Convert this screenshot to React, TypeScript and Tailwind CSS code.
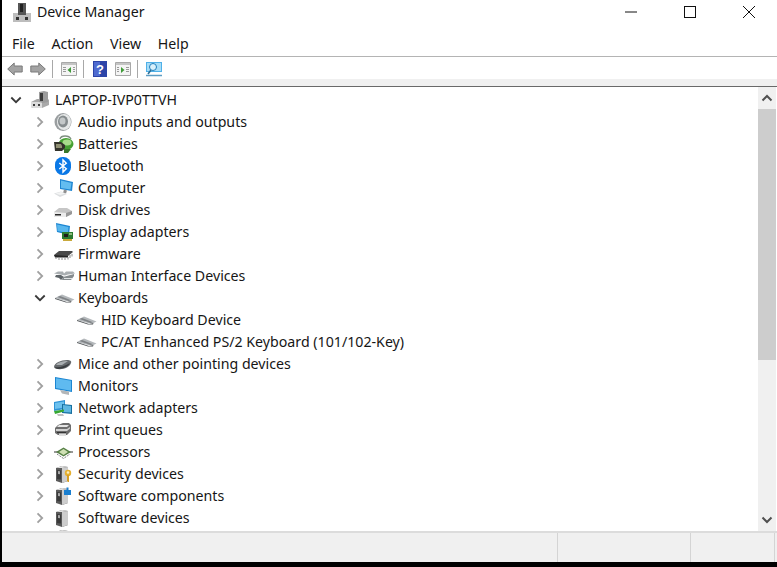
import type { ReactNode } from 'react';

const Svg = ({ children, w = 18, h = 18 }: { children: ReactNode; w?: number; h?: number }) => (
  <svg width={w} height={h} viewBox={`0 0 ${w} ${h}`} className="block shrink-0">
    {children}
  </svg>
);

const Laptop = () => (
  <Svg>
    <path d="M0 11l6-3h11l1 1v5l-7 3H2l-2-1z" fill="#a9a9a9" />
    <path d="M0 11h11v6H2l-2-1z" fill="#dcdcdc" />
    <path d="M8 1l5-1 4 1v10l-5 1-4-1z" fill="#9c9c9c" />
    <path d="M9 2h3v8H9z" fill="#3a3a3a" />
    <path d="M2 13h2v2H2zM7 13h2v2H7z" fill="#3e3e3e" />
  </Svg>
);
const Audio = () => (
  <Svg>
    <ellipse cx="9" cy="9" rx="8.500" ry="9" fill="#9a9ea0" />
    <ellipse cx="10" cy="9" rx="7" ry="8" fill="#e6e8e8" />
    <ellipse cx="9" cy="8.500" rx="5" ry="6" fill="#868c8e" />
    <ellipse cx="8.500" cy="8" rx="3" ry="3.500" fill="#c4c8c9" />
  </Svg>
);
const Battery = () => (
  <Svg w={20}>
    <path d="M6 4c1-4 9-4 11 0" stroke="#7f8f80" strokeWidth="1.300" fill="none" />
    <ellipse cx="12" cy="9" rx="7.500" ry="6" fill="#45a032" />
    <ellipse cx="13" cy="7.500" rx="4.500" ry="3" fill="#a8dc8c" />
    <path d="M0 7h7l4 3v3l-3 3H1z" fill="#33332b" />
    <path d="M2 9h5l1 2v2H2z" fill="#8f8f72" />
    <path d="M10 14h7l-3 4h-4z" fill="#38792a" />
  </Svg>
);
const Bluetooth = () => (
  <Svg>
    <rect x="1" y="0" width="16" height="18" rx="7.500" fill="#0a78e6" />
    <path d="M5.300 6l7 5.700L9 15V3l3.300 3.300-7 5.700" stroke="#fff" strokeWidth="1.400" fill="none" />
  </Svg>
);
const Computer = () => (
  <Svg w={20}>
    <path d="M6 0l13 3-1 9-12-2z" fill="#1f86d2" />
    <path d="M7 1.500l10.500 2.500-1 6.500L7 9z" fill="#63bdf0" />
    <path d="M10 10.500l3 1-1 3-3-.5z" fill="#8f8f8f" />
    <path d="M0 14.500l7-2 6 2.500-7 3z" fill="#dcdee0" />
    <path d="M1.500 14.500l5.500-1.500 4 1.500-5 1.500z" fill="#f3f4f4" />
  </Svg>
);
const Disk = () => (
  <Svg>
    <path d="M0 11l5-4h8l5 3v3l-6 3H1l-1-1z" fill="#c6c6c6" />
    <path d="M0 11l12 1v4H1l-1-1z" fill="#ececec" />
    <path d="M1 13h6v1.500H1z" fill="#2a2a2a" />
    <path d="M12 12l6-2v3l-6 3z" fill="#989898" />
  </Svg>
);
const Display = () => (
  <Svg w={20}>
    <path d="M2 0l14 3-1 9-12-3z" fill="#1c86d2" />
    <path d="M3 1.500l11.500 2.500-.5 6L3.500 8z" fill="#58b7ee" />
    <path d="M8 9h11v7H8z" fill="#2b7a30" />
    <path d="M10 11h4v3h-4z" fill="#1c1c1c" />
    <path d="M15 10h3v2h-3z" fill="#8dbb7c" />
    <path d="M9 16h9v2H9z" fill="#c9a93c" />
  </Svg>
);
const Firmware = () => (
  <Svg w={20}>
    <path d="M0 10l5-4h13l1 1-5 4H1z" fill="#4a4a4a" />
    <path d="M0 10l14 1v1.500H1z" fill="#262626" />
    <path d="M2 12v2M5 12.500v2.500M8 12.500v2.500M11 12.500v2.500M14 12v2.500M16 10v3M18 9v2.500" stroke="#8c8c8c" strokeWidth="1" />
  </Svg>
);
const Hid = () => (
  <Svg w={21}>
    <path d="M0 6.500l4-2h5l1 2 2-2h7l2 2-7 1-3 1-5-1z" fill="#a9aeb1" />
    <path d="M2 8h5l3 2-3 3-2-2-4-1z" fill="#5f6569" />
    <path d="M9 10l11-3v2l-3 4H8z" fill="#858b8e" />
    <path d="M10 11.500h8" stroke="#dfe2e3" strokeWidth="1" />
  </Svg>
);
const Keyboard = ({ w = 21 }: { w?: number }) => (
  <Svg w={w}>
    <path d="M1 9l7-3.500 12.500 5-3.500 1.700H13z" fill="#b4b8bb" />
    <path d="M6 7l11 4.300-2.500.7-11-4z" fill="#7f8386" />
    <path d="M1 9l12 4 4.500-1-.5 1.500H12L1 10z" fill="#55595c" />
  </Svg>
);
const Mouse = () => (
  <Svg>
    <path d="M0 12c0-4 7-7 13-7 3 0 5 1 4 3-1 4-8 7-13 6-2 0-4-1-4-2z" fill="#666a6d" />
    <path d="M2 10c2-3 7-4 12-4l-6 4z" fill="#a9aeb1" />
    <path d="M1 12c4 1 10-1 15-4-1 3-7 6-12 6-1 0-3-1-3-2z" fill="#393c3f" />
  </Svg>
);
const Monitor = () => (
  <Svg w={19}>
    <path d="M1 0l17 3v12L1 12z" fill="#1c86d2" />
    <path d="M2 1.200l15 2.500v10L2 11z" fill="#5fbaf0" />
    <path d="M6 13l9 1.500V18l-7-1.500z" fill="#b3b6b8" />
  </Svg>
);
const Network = () => (
  <Svg w={19}>
    <path d="M0 3l11-2v9L0 12z" fill="#2f93d6" />
    <path d="M1 4l9-1.500v6L1 10z" fill="#6cc1ee" />
    <path d="M8 5l10 1v9l-10-1z" fill="#176f9f" />
    <path d="M9 6l8 1v6.500L9 13z" fill="#5fb7e2" />
    <path d="M0 12l10-1.500v2L1 15z" fill="#36a832" />
    <path d="M3 15h6l1 2H4z" fill="#bfbfbf" />
  </Svg>
);
const Printer = () => (
  <Svg>
    <path d="M4 4l5-2h6l2 2v6l-4 4H4l-3-2V7z" fill="#6d6d6d" />
    <path d="M5 4h10l-2 2H3z" fill="#e4e4e4" />
    <path d="M2 8h11l3-2v1.500L13 10H2z" fill="#cfcfcf" />
    <path d="M3 11h9v1H3z" fill="#333" />
    <path d="M5 12.500h7V15H5z" fill="#dedede" />
  </Svg>
);
const Processor = () => (
  <Svg w={19}>
    <path d="M0 9h19" stroke="#333" strokeWidth="1" />
    <path d="M9.500 4.500l7.500 4.500-7.500 4.500L2 9z" fill="#557f44" />
    <path d="M9.500 6l4.500 3-4.500 3L5 9z" fill="#cfe0b4" />
    <path d="M3 11l6.500 4.500L16 11" stroke="#555" fill="none" strokeWidth="1" strokeDasharray="1 1" />
  </Svg>
);
const Tower = () => (
  <>
    <path d="M2 3l6-2 6 1v14l-6 2-6-2z" fill="#5a5a5a" />
    <path d="M8 3l6-1v14l-6 2z" fill="#cdcdcd" />
    <path d="M3 5l4 .500v9L3 14z" fill="#3a3a3a" />
    <path d="M4 6l2 .300v3L4 9z" fill="#a8a8a8" />
    <path d="M2 3l6-2 6 1-6 1z" fill="#e2e2e2" />
  </>
);
const Security = () => (
  <Svg>
    <Tower />
    <circle cx="14" cy="8" r="3.200" fill="#e5b030" />
    <circle cx="14" cy="7.500" r="1.300" fill="#fbeec0" />
    <path d="M13 10h2v7h-1l-1-1z" fill="#d89f22" />
  </Svg>
);
const SoftComp = () => (
  <Svg>
    <Tower />
    <path d="M10 3h2.500V0.500h2V3H17v5H10z" fill="#1a7fd0" />
  </Svg>
);
const SoftDev = () => (
  <Svg>
    <Tower />
  </Svg>
);

const Chevron = ({ open }: { open?: boolean }) => (
  <svg width="16" height="16" viewBox="0 0 16 16" className="block shrink-0">
    {open ? (
      <path d="M3.300 5.500L8 10.200l4.700-4.700" stroke="#3a3a3a" strokeWidth="1.800" fill="none" />
    ) : (
      <path d="M5.500 3.300L10.200 8l-4.700 4.700" stroke="#a0a0a0" strokeWidth="1.800" fill="none" />
    )}
  </svg>
);

const rows: { label: string; icon: ReactNode }[] = [
  { label: 'Audio inputs and outputs', icon: <Audio /> },
  { label: 'Batteries', icon: <Battery /> },
  { label: 'Bluetooth', icon: <Bluetooth /> },
  { label: 'Computer', icon: <Computer /> },
  { label: 'Disk drives', icon: <Disk /> },
  { label: 'Display adapters', icon: <Display /> },
  { label: 'Firmware', icon: <Firmware /> },
  { label: 'Human Interface Devices', icon: <Hid /> },
];

const rowsAfter: { label: string; icon: ReactNode }[] = [
  { label: 'Mice and other pointing devices', icon: <Mouse /> },
  { label: 'Monitors', icon: <Monitor /> },
  { label: 'Network adapters', icon: <Network /> },
  { label: 'Print queues', icon: <Printer /> },
  { label: 'Processors', icon: <Processor /> },
  { label: 'Security devices', icon: <Security /> },
  { label: 'Software components', icon: <SoftComp /> },
  { label: 'Software devices', icon: <SoftDev /> },
];

function Row({ label, icon, open }: { label: string; icon: ReactNode; open?: boolean }) {
  return (
    <div className="flex h-[22px] shrink-0 items-center pl-[27px]">
      <Chevron open={open} />
      <div className="ml-[6px] flex w-[24px] justify-start">{icon}</div>
      <span className="whitespace-nowrap">{label}</span>
    </div>
  );
}

function Child({ label }: { label: string }) {
  return (
    <div className="flex h-[22px] shrink-0 items-center pl-[71px]">
      <div className="w-[25px]">
        <Keyboard />
      </div>
      <span className="whitespace-nowrap">{label}</span>
    </div>
  );
}

function Sep() {
  return <div className="h-[18px] w-px shrink-0 bg-[#a8a8a8]" />;
}

export default function App() {
  return (
    <div className="flex h-[567px] w-[777px] flex-col overflow-hidden bg-black pl-[2px] pb-[5px] font-['Noto_Sans',sans-serif] text-[14.2px] text-[#161616]">
      <div className="flex min-h-0 flex-1 flex-col bg-white">
        {/* title bar */}
        <div className="flex h-[33px] shrink-0 items-center">
          <div className="ml-[10px] mt-[-8px]">
            <svg width="20" height="22" viewBox="0 0 20 22" className="block">
              <path d="M1 11h18v9H1z" fill="#bdbdbd" />
              <path d="M6 1h8v12H6z" fill="#555" />
              <path d="M8 2h3v8H8z" fill="#222" />
              <path d="M4 15h3v3H4zM13 15h3v3h-3z" fill="#333" />
            </svg>
          </div>
          <span className="ml-[5px] mt-[-9px]">Device Manager</span>
          <div className="mb-[10px] ml-auto flex items-center">
            <svg width="14" height="14" viewBox="0 0 14 14" className="mr-[45px] block">
              <path d="M1 7h12" stroke="#111" strokeWidth="1" />
            </svg>
            <svg width="14" height="14" viewBox="0 0 14 14" className="mr-[45px] block">
              <rect x="1.500" y="1.500" width="11" height="11" stroke="#111" fill="none" strokeWidth="1" />
            </svg>
            <svg width="14" height="14" viewBox="0 0 14 14" className="mr-[21px] block">
              <path d="M1 1l12 12M13 1L1 13" stroke="#111" strokeWidth="1" />
            </svg>
          </div>
        </div>

        {/* menu */}
        <div className="flex h-[24px] shrink-0 items-center gap-[16.7px] border-b border-[#b4b4b4] pb-[2px] pl-[10px]">
          <span>File</span>
          <span>Action</span>
          <span>View</span>
          <span>Help</span>
        </div>

        {/* toolbar */}
        <div className="flex h-[22px] shrink-0 items-center pl-[5px] pt-[1px]">
          <svg width="16" height="14" viewBox="0 0 16 14" className="block">
            <path d="M.7 7l6.500-6v3h8v6h-8v3z" fill="#a3a3a3" stroke="#7b7b7b" />
          </svg>
          <svg width="16" height="14" viewBox="0 0 16 14" className="ml-[7px] block">
            <path d="M15.300 7l-6.500-6v3h-8v6h8v3z" fill="#a3a3a3" stroke="#7b7b7b" />
          </svg>
          <div className="ml-[6px]">
            <Sep />
          </div>
          <svg width="16" height="14" viewBox="0 0 16 14" className="ml-[8px] block">
            <path d="M.5.500h15v13H.5z" fill="#f4f4f4" stroke="#a8a8a8" />
            <path d="M1 1h14v2H1z" fill="#c4c4c4" />
            <path d="M2 5h3v1H2zM2 7h3v1H2zM2 9h3v1H2zM12 5h2v1h-2zM12 7h2v1h-2zM12 9h2v1h-2z" fill="#9a9a9a" />
            <path d="M10 5v6L6.500 8z" fill="#3f9a38" />
          </svg>
          <div className="ml-[6px]">
            <Sep />
          </div>
          <svg width="14" height="16" viewBox="0 0 14 16" className="ml-[9px] block">
            <rect width="14" height="16" fill="#2c44a8" />
            <rect x="1" y="1" width="6" height="14" fill="#4f6bd0" />
            <text x="7" y="13" textAnchor="middle" fontSize="13" fontWeight="700" fontFamily="Liberation Sans" fill="#fff">
              ?
            </text>
          </svg>
          <svg width="16" height="14" viewBox="0 0 16 14" className="ml-[8px] block">
            <path d="M.5.500h15v13H.5z" fill="#f4f4f4" stroke="#a8a8a8" />
            <path d="M1 1h14v2H1z" fill="#c4c4c4" />
            <path d="M2 5h2v1H2zM2 7h2v1H2zM2 9h2v1H2zM11 5h3v1h-3zM11 7h3v1h-3zM11 9h3v1h-3z" fill="#9a9a9a" />
            <path d="M6 5v6l3.500-3z" fill="#3f9a38" />
          </svg>
          <div className="ml-[6px]">
            <Sep />
          </div>
          <svg width="18" height="16" viewBox="0 0 18 16" className="ml-[7px] block">
            <path d="M1 1h16v10H1z" fill="#4fb0e8" />
            <path d="M2 2h14v8H2z" fill="#a6dcf7" />
            <circle cx="8" cy="6" r="3.500" fill="#d9f0fb" stroke="#1f7ebc" />
            <path d="M6 9l-3 4" stroke="#2b6d96" strokeWidth="1.500" />
            <path d="M1 14.500h16" stroke="#5d9dc4" strokeWidth="1.500" />
          </svg>
        </div>

        <div className="h-[7px] shrink-0 bg-[#f0f0f0]" />
        <div className="h-[1px] shrink-0 bg-[#696969]" />

        {/* tree + scrollbar */}
        <div className="flex min-h-0 flex-1 pl-[3px]">
          <div className="flex min-w-0 flex-1 flex-col overflow-hidden pt-[2px]">
            <div className="flex h-[22px] shrink-0 items-center pl-[3px]">
              <Chevron open />
              <div className="ml-[7px] w-[24px]">
                <Laptop />
              </div>
              <span>LAPTOP-IVP0TTVH</span>
            </div>
            {rows.map((r) => (
              <Row key={r.label} label={r.label} icon={r.icon} />
            ))}
            <Row label="Keyboards" icon={<Keyboard />} open />
            <Child label="HID Keyboard Device" />
            <Child label="PC/AT Enhanced PS/2 Keyboard (101/102-Key)" />
            {rowsAfter.map((r) => (
              <Row key={r.label} label={r.label} icon={r.icon} />
            ))}
            {/* only the top edge of the next category's icon shows */}
            <div className="shrink-0 pl-[49px]">
              <SoftDev />
            </div>
          </div>
          <div className="flex w-[18px] shrink-0 flex-col bg-[#f0f0f0]">
            <div className="flex h-[22px] items-center justify-center">
              <svg width="12" height="8" viewBox="0 0 12 8" className="block">
                <path d="M1.500 6.500L6 2l4.500 4.500" stroke="#505050" strokeWidth="2" fill="none" />
              </svg>
            </div>
            <div className="h-[251px] bg-[#cdcdcd]" />
            <div className="mb-[1px] mt-auto flex h-[20px] items-center justify-center">
              <svg width="12" height="8" viewBox="0 0 12 8" className="block">
                <path d="M1.500 1.500L6 6l4.500-4.500" stroke="#505050" strokeWidth="2" fill="none" />
              </svg>
            </div>
          </div>
          <div className="w-px shrink-0" />
        </div>

        {/* status bar */}
        <div className="flex h-[31px] shrink-0 border-t-2 border-[#dcdcdc] bg-[#f0f0f0]">
          <div className="w-[556px] border-r border-[#d4d4d4]" />
          <div className="w-[133px] border-r border-[#d4d4d4]" />
          <div className="w-[84px] border-r border-[#d4d4d4]" />
        </div>
      </div>
    </div>
  );
}
